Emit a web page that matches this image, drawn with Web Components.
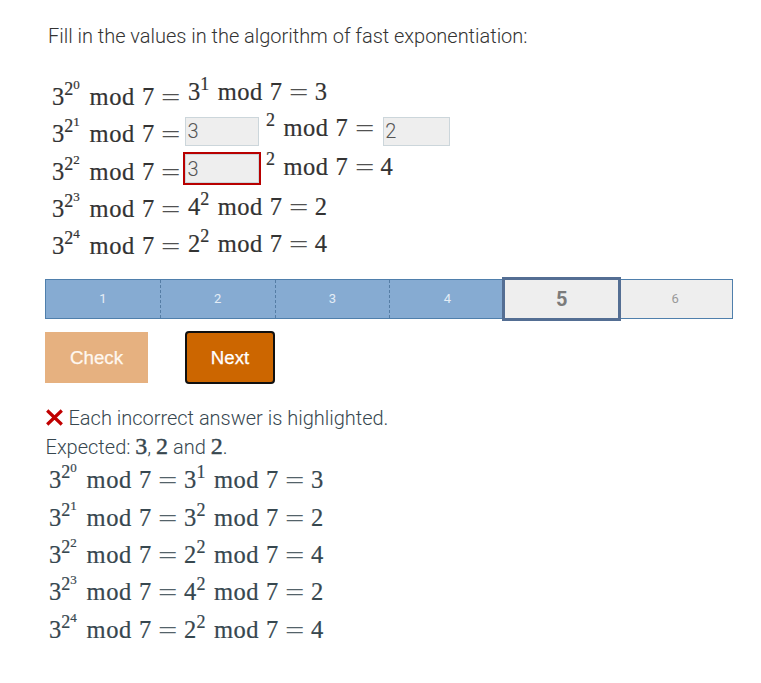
<!DOCTYPE html>
<html lang="en">
<head>
<meta charset="utf-8">
<title>Fast exponentiation</title>
<style>
body { margin: 0; background: #fff; font-family: Roboto, "Liberation Sans", sans-serif; font-weight: 300; font-size: 20px; color: #333; }
</style>
</head>
<body>
<quiz-page></quiz-page>
<script>
const define = (name, html) => {
  customElements.define(name, class extends HTMLElement {
    connectedCallback() {
      if (this.shadowRoot) return;
      const root = this.attachShadow({ mode: 'open' });
      root.innerHTML = typeof html === 'function' ? html(this) : html;
    }
  });
};

// One side of an equation: base, stacked exponents, "mod 7 =", optional result.
define('math-line', el => {
  const a = n => el.getAttribute(n);
  const part = (cls, value) => value ? `<span class="${cls}">${value}</span>` : '';
  return `<style>
    :host { display: flex; align-items: baseline; height: 37.33px; line-height: 37.33px; white-space: nowrap;
      font-family: "Liberation Serif", serif; font-weight: 400; font-size: 24.5px; -webkit-text-stroke: .2px currentColor; }
    span { flex: none; display: block; }
    .b { width: 12.3px; }
    .s { width: 9px; font-size: 18px; transform: translateY(-10px); }
    .t { width: 7px; font-size: 13px; transform: translateY(-16.5px); }
    .m { width: 52px; margin-left: 8.5px; letter-spacing: .5px; }
    .v { width: 12px; }
    .e { width: 17.5px; margin-left: 8px; font-size: 24px; -webkit-text-stroke: 0; opacity: .85; }
    .e i { display: inline-block; font-style: normal; transform: scaleX(1.43); transform-origin: 0 60%; margin-left: -1px; }
    .r { margin-left: 7.5px; width: 12px; }
    .t + .m { margin-left: 9.3px; width: 52.5px; }
    </style>${part('b', a('base'))}${part('s', a('sup'))}${part('t', a('top'))}<span class="m">mod</span><span class="v">7</span><span class="e"><i>=</i></span>${part('r', a('result'))}`;
});

// A full equation made of two chained sides.
define('math-equation', el => {
  const a = n => el.getAttribute(n);
  return `<style>:host { display: flex; } math-line + math-line { margin-left: 7.5px; }</style>
  <math-line base="${a('base')}" sup="2" top="${a('top')}"></math-line><math-line base="${a('b2')}" sup="${a('s2')}" result="${a('result')}"></math-line>`;
});

define('answer-box', `<style>
  :host { display: block; flex: none; box-sizing: border-box; width: 74px; height: 29px; padding-left: 1.5px; border: 1px solid #ccd6db; background: #eee;
    font: 300 20px/27px Roboto, sans-serif; color: #555; }
  :host([wrong]) { box-shadow: 0 0 0 2px #b80000; line-height: 28px; }
  </style><slot></slot>`);

define('step-cell', `<style>
  :host { flex: 1 1 0; display: flex; align-items: center; justify-content: center; box-sizing: border-box; padding-bottom: 1px;
    background: #86abd2; color: #e4edf6; font-size: 13px; font-weight: 400; border-right: 1px dashed #557da5; }
  :host([last-done]) { border-right: 0; }
  :host([current]) { margin: -3px -3px -3px -2px; flex: 0 0 119px; border: 3px solid #546e93; background: #eee; color: #7b7b7b; font-size: 20px; font-weight: 700; z-index: 1; padding-bottom: 1px; }
  :host([todo]) { background: #eee; color: #999; border: 0; }
  </style><slot></slot>`);

define('step-bar', `<style>
  :host { display: flex; box-sizing: border-box; width: 688px; height: 40px; border: 1px solid #4f7fac; }
  </style><slot></slot>`);

define('action-button', `<style>
  :host { display: flex; align-items: center; justify-content: center; box-sizing: border-box; width: 103px; height: 51px;
    background: #e6b180; color: #fff8f0; font: 400 18.7px "Liberation Sans", Arial, sans-serif; -webkit-text-stroke: .25px currentColor; }
  :host([active]) { width: 90px; height: 53px; background: #cc6600; border: 2px solid #101010; border-radius: 4px; color: #fff; }
  </style><slot></slot>`);

define('quiz-page', `<style>
  :host { display: block; padding: 22px 28px 0 45px; }
  .title { padding-left: 3px; height: 29px; line-height: 29px; letter-spacing: -.02px; }
  .task { display: flex; height: 206px; box-sizing: border-box; padding-top: 22px; align-items: flex-start; }
  .left { margin: 5px 0 0 7px; width: 128px; }
  .right { margin-left: 5px; }
  .right > math-line { margin-left: 3px; }
  .fill { display: flex; align-items: flex-start; }
  .fill math-line { margin-left: 7px; }
  .fill .res { width: 67px; margin-left: 9.7px; }
  .first { height: 37.7px; }
  .first math-line { margin-top: -1px; }
  .first answer-box { margin-top: 6.7px; }
  .second { height: 40px; }
  .second answer-box { margin-top: 6px; }
  step-bar { margin-top: 22px; }
  .buttons { display: flex; gap: 37px; align-items: center; margin-top: 12px; height: 53px; }
  .feedback { margin-top: 20px; color: #37474f; line-height: 29px; }
  .msg { display: flex; align-items: center; height: 29px; letter-spacing: -.01px; }
  .msg svg { margin: -2px 5.5px 0 1px; }
  .exp { height: 28.4px; padding-left: .5px; }
  b { font: 400 24px/20px "Liberation Serif", serif; -webkit-text-stroke: .4px currentColor; }
  .solution { padding-left: 4px; }
  </style>
  <div class="title">Fill in the values in the algorithm of fast exponentiation:</div>
  <div class="task">
    <div class="left">
      <math-line base="3" sup="2" top="0"></math-line>
      <math-line base="3" sup="2" top="1"></math-line>
      <math-line base="3" sup="2" top="2"></math-line>
      <math-line base="3" sup="2" top="3"></math-line>
      <math-line base="3" sup="2" top="4"></math-line>
    </div>
    <div class="right">
      <math-line base="3" sup="1" result="3"></math-line>
      <div class="fill first">
        <answer-box>3</answer-box>
        <math-line sup="2"></math-line>
        <answer-box class="res">2</answer-box>
      </div>
      <div class="fill second">
        <answer-box wrong>3</answer-box>
        <math-line sup="2" result="4"></math-line>
      </div>
      <math-line base="4" sup="2" result="2"></math-line>
      <math-line base="2" sup="2" result="4"></math-line>
    </div>
  </div>
  <step-bar>
    <step-cell>1</step-cell><step-cell>2</step-cell><step-cell>3</step-cell><step-cell last-done>4</step-cell><step-cell current>5</step-cell><step-cell todo>6</step-cell>
  </step-bar>
  <div class="buttons"><action-button>Check</action-button><action-button active>Next</action-button></div>
  <div class="feedback">
    <div class="msg"><svg width="17" height="17" viewBox="0 0 17 17"><path d="M1.2 1.5 15.8 15.5M15.8 1.5 1.2 15.5" stroke="#c00000" stroke-width="3.2"/></svg>Each incorrect answer is highlighted.</div>
    <div class="exp">Expected: <b>3</b>, <b>2</b> and <b>2</b>.</div>
    <div class="solution">
      <math-equation base="3" top="0" b2="3" s2="1" result="3"></math-equation>
      <math-equation base="3" top="1" b2="3" s2="2" result="2"></math-equation>
      <math-equation base="3" top="2" b2="2" s2="2" result="4"></math-equation>
      <math-equation base="3" top="3" b2="4" s2="2" result="2"></math-equation>
      <math-equation base="3" top="4" b2="2" s2="2" result="4"></math-equation>
    </div>
  </div>`);
</script>
</body>
</html>
